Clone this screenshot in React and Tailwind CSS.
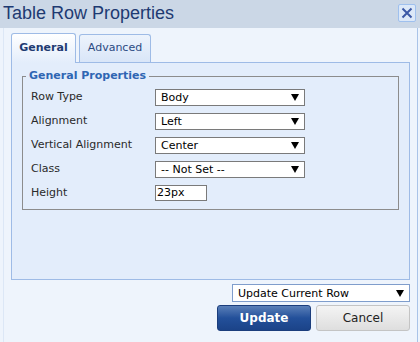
import React from "react";

const font = "font-['DejaVu_Sans',Verdana,sans-serif]";

function Caret() {
    return (
        <svg width="8" height="8" viewBox="0 0 8 8" className="shrink-0">
            <path d="M0 1 L8 1 L4 8 Z" fill="#000" />
        </svg>
    );
}

function FakeSelect({ value, className = "" }) {
    return (
        <div
            className={`flex items-center justify-between bg-white border border-[#7a7a7a] pl-[5px] pr-[5px] text-[11px] leading-none text-[#000] ${className}`}
        >
            <span>{value}</span>
            <Caret />
        </div>
    );
}

const rows = [
    { label: "Row Type", value: "Body" },
    { label: "Alignment", value: "Left" },
    { label: "Vertical Alignment", value: "Center" },
    { label: "Class", value: "-- Not Set --" },
];

export default function App() {
    return (
        <div className={`w-[420px] h-[342px] bg-[#eef4fc] flex flex-col ${font}`}>
            <div className="h-[28px] bg-[#cbd7e6] flex items-center justify-between pl-[3px] pr-[4px] shrink-0">
                <span className="font-['Liberation_Sans',Arial,sans-serif] text-[18px] text-[#1e3a72] mt-[-2px]">
                    Table Row Properties
                </span>
                <div className="w-[18px] h-[18px] mt-[-3px] rounded-[2px] border border-[#9fc0ee] bg-[#dce8f8] flex items-center justify-center">
                    <svg width="12" height="12" viewBox="0 0 12 12">
                        <path d="M1.5 1.5 L10.5 10.5 M10.5 1.5 L1.5 10.5" stroke="#3b58a6" strokeWidth="2" />
                    </svg>
                </div>
            </div>

            <div className="flex-1 ml-[3px] mr-[2px] border-l border-l-[#dce7f6] border-r border-r-[#a9c3e8] pl-[7px] pr-[7px] pt-[5px] flex flex-col">
                <div className="flex items-end h-[29px]">
                    <div className="w-[65px] h-[30px] mb-[-1px] relative z-10 rounded-t-[3px] border border-b-0 border-[#9ebbe6] bg-gradient-to-b from-[#ffffff] to-[#e3edfb] flex items-center justify-center">
                        <span className="text-[11px] font-bold text-[#1e3a72]">General</span>
                    </div>
                    <div className="ml-[3px] w-[72px] h-[28px] rounded-t-[3px] border border-b-0 border-[#9ebbe6] bg-gradient-to-b from-[#edf3fc] to-[#d9e6f8] flex items-center justify-center">
                        <span className="text-[11px] text-[#2b4a82]">Advanced</span>
                    </div>
                </div>

                <div className="h-[218px] border border-[#9ebbe6] bg-[#e3edfb] px-[10px] pt-[6px]">
                    <fieldset className="border border-[#8c8c8c] pb-[8px] pt-[6px]">
                        <legend className="ml-[3px] px-[3px] text-[11px] font-bold text-[#2f66b3] leading-[14px]">
                            General Properties
                        </legend>
                        <div className="flex flex-col gap-[8px] px-[8px]">
                            {rows.map((r) => (
                                <div key={r.label} className="flex items-center h-[16px]">
                                    <span className="w-[124px] text-[11px] text-[#2a2a2a]">{r.label}</span>
                                    <FakeSelect value={r.value} className="w-[150px] h-[17px]" />
                                </div>
                            ))}
                            <div className="flex items-center h-[16px]">
                                <span className="w-[124px] text-[11px] text-[#2a2a2a]">Height</span>
                                <div className="w-[52px] h-[16px] bg-white border border-[#7a7a7a] pl-[1px] text-[11px] leading-[14px] text-black">
                                    23px
                                </div>
                            </div>
                        </div>
                    </fieldset>
                </div>

                <div className="flex flex-col items-end mt-[4px]">
                    <FakeSelect
                        value="Update Current Row"
                        className="w-[178px] h-[18px] border-[#7f9dcc]"
                    />
                    <div className="flex gap-[5px] mt-[3px]">
                        <div className="w-[94px] h-[26px] rounded-[3px] border border-[#1b3d7c] bg-gradient-to-b from-[#5a7fb8] via-[#23509a] to-[#1b4388] flex items-center justify-center">
                            <span className="text-[12px] font-bold text-white">Update</span>
                        </div>
                        <div className="w-[94px] h-[26px] rounded-[3px] border border-[#c4c4c4] bg-gradient-to-b from-[#f4f4f4] to-[#dedede] flex items-center justify-center">
                            <span className="text-[12px] text-[#222]">Cancel</span>
                        </div>
                    </div>
                </div>
            </div>
        </div>
    );
}
